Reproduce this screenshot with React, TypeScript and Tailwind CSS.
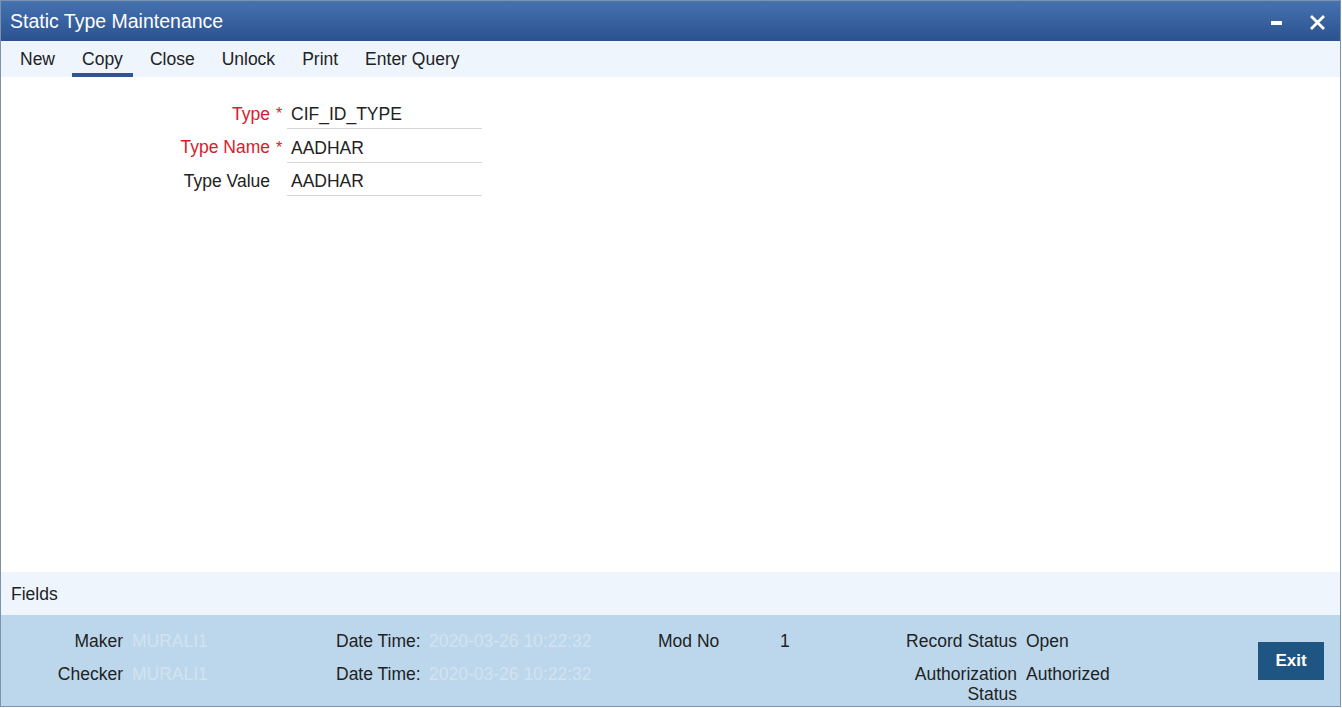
import React from "react";

const F = { fontFamily: '"Liberation Sans", Arial, sans-serif' };

function FooterRow({
  l1, v1, l2, v2, l3, v3, l4, v4,
}: { l1: string; v1: string; l2: string; v2: string; l3: string; v3: string; l4: string; v4: string }) {
  return (
    <div className="flex items-start text-[17.5px] leading-[20px] text-[#222]">
      <div className="ml-[36px] w-[86px] text-right">{l1}</div>
      <div className="ml-[9px] w-[204px] text-[#d3e2ef]">{v1}</div>
      <div className="w-[93px]">{l2}</div>
      <div className="w-[229px] text-[#d3e2ef]">{v2}</div>
      <div className="w-[122px]">{l3}</div>
      <div className="w-[111px]">{v3}</div>
      <div className="w-[126px] text-right">{l4}</div>
      <div className="ml-[9px]">{v4}</div>
    </div>
  );
}

export default function App() {
  return (
    <div style={F} className="w-[1341px] h-[708px] bg-white">
      <div className="w-[1341px] h-[707px] border border-[#7d92ad] flex flex-col">
        {/* Title bar */}
        <div className="h-[40px] flex items-center justify-between bg-gradient-to-b from-[#4672b0] to-[#2a528f] text-white">
          <div className="pl-[9px] pt-[2px] text-[19.5px] leading-none">Static Type Maintenance</div>
          <div className="flex items-center gap-[28px] pr-[15px]">
            <div className="w-[11px] h-[4px] bg-white mt-[3px]" />
            <svg width="15" height="15" viewBox="0 0 15 15" className="mt-[2px]">
              <path d="M2 2 L13 13 M13 2 L2 13" stroke="white" strokeWidth="2.8" strokeLinecap="square" />
            </svg>
          </div>
        </div>
        {/* Toolbar */}
        <div className="h-[36px] bg-[#eef5fc] flex items-stretch pl-[9px] gap-[7px] text-[17.5px] text-[#222]">
          {["New", "Copy", "Close", "Unlock", "Print", "Enter Query"].map((t) => (
            <div
              key={t}
              className={
                "px-[10px] flex items-center pt-[5px] border-b-[4px] " +
                (t === "Copy" ? "border-[#2f5597]" : "border-transparent")
              }
            >
              {t}
            </div>
          ))}
        </div>
        {/* Body */}
        <div className="h-[495px] bg-white pt-[20px]">
          {[
            { l: "Type", req: true, v: "CIF_ID_TYPE" },
            { l: "Type Name", req: true, v: "AADHAR" },
            { l: "Type Value", req: false, v: "AADHAR" },
          ].map((r) => (
            <div key={r.l} className="flex items-center h-[33.5px] text-[17.5px]">
              <div className={"w-[269px] text-right " + (r.req ? "text-[#d7202b]" : "text-[#222]")}>{r.l}</div>
              <div className="w-[17px] pl-[6px] text-[#d7202b] text-[16px] self-start pt-[5px]">{r.req ? "*" : ""}</div>
              <div className="w-[195px] h-[31px] border-b border-[#d6d6d6] pl-[4px] flex items-center pt-[2px] text-[#222]">
                {r.v}
              </div>
            </div>
          ))}
        </div>
        {/* Fields bar */}
        <div className="h-[43px] bg-[#eef5fc] flex items-center pl-[10px] pt-[1px] text-[17.5px] text-[#222]">Fields</div>
        {/* Footer */}
        <div className="h-[91px] bg-[#bcd7ec] flex items-start">
          <div className="flex-1 flex flex-col gap-[13px] pt-[16px]">
            <FooterRow l1="Maker" v1="MURALI1" l2="Date Time:" v2="2020-03-26 10:22:32" l3="Mod No" v3="1" l4="Record Status" v4="Open" />
            <FooterRow l1="Checker" v1="MURALI1" l2="Date Time:" v2="2020-03-26 10:22:32" l3="" v3="" l4="Authorization Status" v4="Authorized" />
          </div>
          <div className="mt-[27px] mr-[16px] w-[66px] h-[38px] bg-[#1f5582] text-white font-bold text-[17px] flex items-center justify-center">
            Exit
          </div>
        </div>
      </div>
    </div>
  );
}
